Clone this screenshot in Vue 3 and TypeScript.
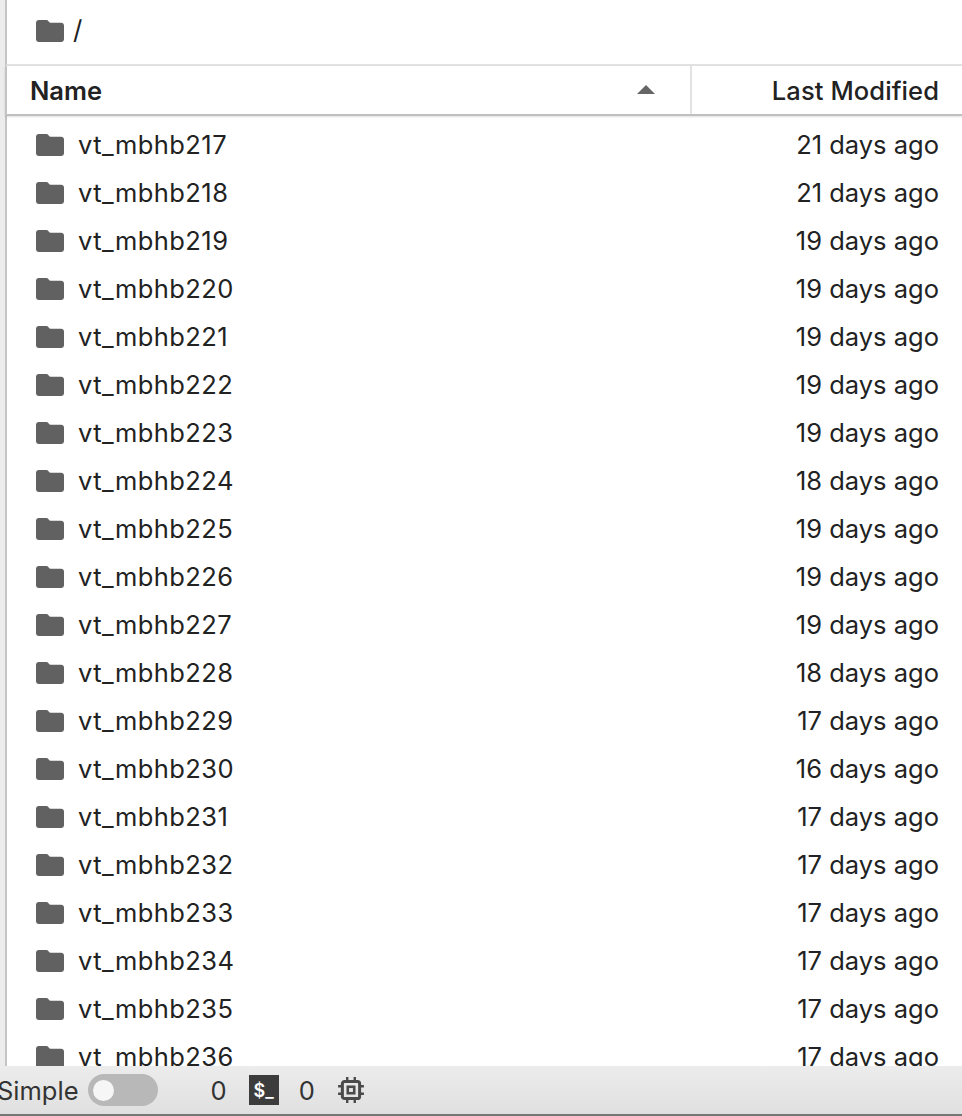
<script setup lang="ts">
interface Row {
  name: string;
  modified: string;
}

const ages = [21, 21, 19, 19, 19, 19, 19, 18, 19, 19, 19, 18, 17, 16, 17, 17, 17, 17, 17, 17];

const rows: Row[] = ages.map((days, i) => ({
  name: `vt_mbhb${217 + i}`,
  modified: `${days} days ago`,
}));

const folderPath = "M10 4H4c-1.1 0-2 .9-2 2v12c0 1.1.9 2 2 2h16c1.1 0 2-.9 2-2V8c0-1.1-.9-2-2-2h-8l-2-2z";
</script>

<template>
  <div class="lab">
    <div class="browser">
      <div class="crumbs">
        <svg class="folder" viewBox="2 4 20 16" preserveAspectRatio="none"><path :d="folderPath" /></svg>
        <span class="slash">/</span>
      </div>
      <div class="head">
        <div class="head-name">
          <span>Name</span>
          <span class="caret"></span>
        </div>
        <div class="head-modified">Last Modified</div>
      </div>
      <ul class="list">
        <li v-for="row in rows" :key="row.name" class="row">
          <svg class="folder" viewBox="2 4 20 16" preserveAspectRatio="none"><path :d="folderPath" /></svg>
          <span class="row-name">{{ row.name }}</span>
          <span class="row-modified">{{ row.modified }}</span>
        </li>
      </ul>
    </div>
    <div class="status">
      <span class="simple">Simple</span>
      <span class="switch"><span class="knob"></span></span>
      <span class="count first">0</span>
      <span class="term">$_</span>
      <span class="count second">0</span>
      <svg class="chip" viewBox="0 0 26 26" fill="none" stroke="#4a4a4a">
        <rect x="5" y="5" width="16" height="16" rx="2" stroke-width="2.8" />
        <rect x="10" y="10" width="6" height="6" stroke-width="2.4" />
        <path d="M9.500 1v4M16.500 1v4M9.500 21v4M16.500 21v4M1 9.500h4M1 16.500h4M21 9.500h4M21 16.500h4" stroke-width="2.2" />
      </svg>
    </div>
    <div class="under">
      <span class="under-dark"></span>
      <span class="under-blue"></span>
      <span class="under-grey"></span>
    </div>
  </div>
</template>

<style>
html,
body {
  margin: 0;
  background: #fff;
  overflow: hidden;
}
</style>

<style scoped>
.lab {
  width: 962px;
  height: 1116px;
  display: flex;
  flex-direction: column;
  overflow: hidden;
  font-family: Inter, "Liberation Sans", sans-serif;
  color: #222;
}

.browser {
  height: 1066px;
  flex: none;
  padding-left: 5px;
  background: linear-gradient(90deg, #ececec 5px, #fff 5px);
  overflow: hidden;
}

.crumbs,
.head,
.list {
  border-left: 2px solid #c4c4c4;
}

.crumbs {
  height: 64px;
  display: flex;
  align-items: center;
  padding-left: 29px;
  gap: 9px;
  border-bottom: 2px solid #e2e2e2;
}

.crumbs .folder {
  margin-top: -3px;
}

.slash {
  font-size: 26px;
  color: #222;
  margin-top: -5px;
}

.folder {
  width: 28px;
  height: 22px;
  flex: none;
  fill: #616161;
}

.head {
  height: 48px;
  display: flex;
  border-bottom: 2px solid #c0c0c0;
  box-shadow: 0 1px 2px rgba(0, 0, 0, 0.12);
  position: relative;
  font-size: 25.5px;
}

.head-name {
  width: 685px;
  display: flex;
  align-items: center;
  justify-content: space-between;
  padding: 0 35px 0 23px;
  box-sizing: border-box;
  font-weight: 600;
  border-right: 2px solid #e2e2e2;
}

.caret {
  width: 0;
  height: 0;
  margin-bottom: 2px;
  border-left: 9px solid transparent;
  border-right: 9px solid transparent;
  border-bottom: 9px solid #666;
}

.head-modified {
  flex: 1;
  display: flex;
  align-items: center;
  justify-content: flex-end;
  padding-right: 23px;
  font-weight: 500;
  letter-spacing: 0.1px;
}

.list {
  list-style: none;
  margin: 0;
  padding: 5px 0 0;
}

.row {
  height: 48px;
  display: flex;
  align-items: center;
  padding: 0 23px 0 29px;
  font-size: 25.5px;
}

.row-name {
  margin: 0 0 2px 14px;
  flex: 1;
  letter-spacing: 0.45px;
}

.row-modified {
  margin-bottom: 2px;
}

.status {
  height: 48px;
  flex: none;
  display: flex;
  align-items: center;
  background: linear-gradient(#ececec, #e0e0e0);
  border-bottom: 2px solid #777;
  font-size: 25.5px;
  color: #333;
}

.simple {
  margin-left: -3px;
}

.switch {
  width: 70px;
  height: 32px;
  margin-left: 9px;
  border-radius: 16px;
  background: #b8b8b8;
  display: flex;
  align-items: center;
  padding-left: 5px;
  box-sizing: border-box;
}

.knob {
  width: 21px;
  height: 21px;
  border-radius: 50%;
  background: #f6f6f6;
}

.count.first {
  margin-left: 53px;
}

.term {
  width: 30px;
  height: 30px;
  margin-left: 22px;
  background: #3c3c3c;
  color: #fff;
  font-size: 18px;
  font-weight: 600;
  font-family: Inter, "Liberation Sans", sans-serif;
  display: flex;
  align-items: center;
  justify-content: center;
}

.count.second {
  margin-left: 20px;
}

.chip {
  width: 28px;
  height: 28px;
  margin-left: 22px;
}

.under {
  flex: 1;
  display: flex;
}

.under-dark {
  width: 30px;
  background: #2f3135;
}

.under-blue {
  width: 198px;
  background: #1f3a6e;
}

.under-grey {
  flex: 1;
  background: #8a8a8a;
}
</style>
